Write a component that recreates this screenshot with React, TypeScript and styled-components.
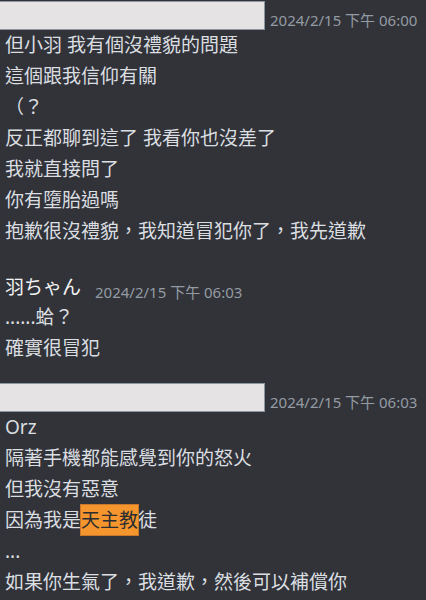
import React from "react";
import styled, { createGlobalStyle } from "styled-components";

interface Message {
  name?: string;
  time: string;
  lines: React.ReactNode[];
  space: number;
}

// styled components are below, so build the data when rendering
const getMessages = (): Message[] => [
  {
    time: "2024/2/15 下午 06:00",
    space: 0,
    lines: [
      "但小羽 我有個沒禮貌的問題",
      "這個跟我信仰有關",
      "（？",
      "反正都聊到這了 我看你也沒差了",
      "我就直接問了",
      "你有墮胎過嗎",
      "抱歉很沒禮貌，我知道冒犯你了，我先道歉",
    ],
  },
  {
    name: "羽ちゃん",
    time: "2024/2/15 下午 06:03",
    space: 25,
    lines: ["......蛤？", "確實很冒犯"],
  },
  {
    time: "2024/2/15 下午 06:03",
    space: 18,
    lines: [
      "Orz",
      "隔著手機都能感覺到你的怒火",
      "但我沒有惡意",
      <>
        因為我是<Mark>天主教</Mark>徒
      </>,
      "...",
      "如果你生氣了，我道歉，然後可以補償你",
    ],
  },
];

const App = () => {
  const messages = getMessages();
  return (
    <>
      <GlobalStyle />
      <Chat>
        {messages.map((m, i) => (
          <Group key={i} $space={m.space}>
            <Header>
              {m.name ? <Name>{m.name}</Name> : <Redacted />}
              <Time>{m.time}</Time>
            </Header>
            {m.lines.map((line, j) => (
              <Line key={j}>{line}</Line>
            ))}
          </Group>
        ))}
      </Chat>
    </>
  );
};

export default App;

const GlobalStyle = createGlobalStyle`
  body {
    margin: 0;
    background: #313338;
  }
`;

const Chat = styled.div`
  width: 426px;
  height: 600px;
  overflow: hidden;
  background: #313338;
  font-family: "Noto Sans", "Noto Sans CJK TC", sans-serif;
  color: #dbdee1;
`;

const Group = styled.div<{ $space: number }>`
  display: flex;
  flex-direction: column;
  margin-top: ${(props) => props.$space}px;
`;

const Header = styled.div`
  display: flex;
  align-items: flex-end;
  height: 30px;
`;

const Redacted = styled.div`
  align-self: flex-start;
  width: 265px;
  height: 29px;
  margin-top: 1px;
  box-sizing: border-box;
  background: #e5e3e3;
  border: 1px solid #8d97a2;
  border-left: none;
`;

const Name = styled.span`
  font-size: 19px;
  line-height: 30px;
  color: #f2f3f5;
  padding-left: 5px;
  margin-right: 9px;
`;

const Time = styled.span`
  font-size: 15px;
  line-height: 19px;
  color: #949ba4;
  margin-left: 5px;
  white-space: nowrap;
`;

const Line = styled.div`
  font-size: 19px;
  line-height: 31px;
  height: 31px;
  padding-left: 5px;
  white-space: nowrap;
`;

const Mark = styled.span`
  background: #f5952d;
  color: #2b2d31;
  outline: 1px solid #c9772a;
  padding: 2px 0;
`;
